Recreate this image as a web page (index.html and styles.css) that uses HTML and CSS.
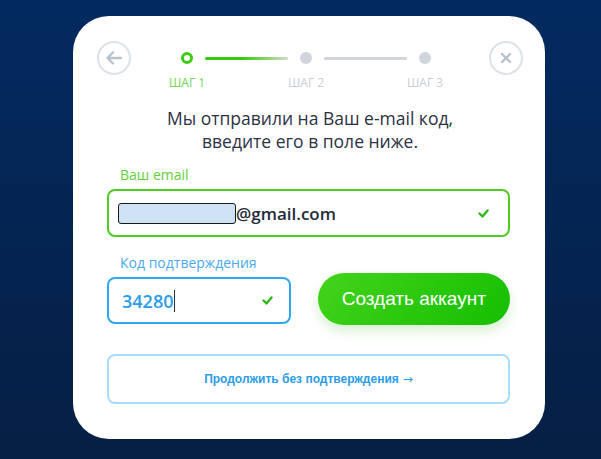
FILE: index.html
```html
<!DOCTYPE html>
<html lang="ru">
<head>
    <meta charset="UTF-8">
    <meta name="viewport" content="width=device-width, initial-scale=1.0">
    <title>Регистрация</title>
    <link rel="stylesheet" href="styles.css">
</head>
<body>
    <div class="card">
        <div class="nav">
            <button class="round-btn" aria-label="Назад">
                <svg width="16" height="14" viewBox="0 0 16 14"><path d="M15 7H2M7 1.5L1.5 7 7 12.5" fill="none" stroke="#b9c1cd" stroke-width="2.4" stroke-linecap="round" stroke-linejoin="round"/></svg>
            </button>
            <div class="steps">
                <div class="step active">
                    <span class="dot"></span>
                    <span class="step-label">ШАГ 1</span>
                </div>
                <span class="line done"></span>
                <div class="step">
                    <span class="dot"></span>
                    <span class="step-label">ШАГ 2</span>
                </div>
                <span class="line"></span>
                <div class="step">
                    <span class="dot"></span>
                    <span class="step-label">ШАГ 3</span>
                </div>
            </div>
            <button class="round-btn" aria-label="Закрыть">
                <svg width="12" height="12" viewBox="0 0 12 12"><path d="M2 2l8 8M10 2l-8 8" fill="none" stroke="#b9c1cd" stroke-width="2.4" stroke-linecap="round"/></svg>
            </button>
        </div>

        <p class="intro">Мы отправили на Ваш e-mail код,<br>введите его в поле ниже.</p>

        <div class="form">
            <label class="field-label green">Ваш email</label>
            <div class="input email">
                <span class="mask"></span><span class="value">@gmail.com</span>
                <svg class="check" width="11" height="9" viewBox="0 0 11 9"><path d="M1.5 4.5l3 3 5-6" fill="none" stroke="#2fb81a" stroke-width="2.4" stroke-linecap="round" stroke-linejoin="round"/></svg>
            </div>

            <label class="field-label blue">Код подтверждения</label>
            <div class="code-row">
                <div class="input code">
                    <span class="value">34280</span><span class="caret"></span>
                    <svg class="check" width="11" height="9" viewBox="0 0 11 9"><path d="M1.5 4.5l3 3 5-6" fill="none" stroke="#2fb81a" stroke-width="2.4" stroke-linecap="round" stroke-linejoin="round"/></svg>
                </div>
                <button class="create-btn">Создать аккаунт</button>
            </div>

            <a class="skip" href="#">Продолжить без подтверждения <span class="arrow">→</span></a>
        </div>
    </div>
</body>
</html>
```

FILE: styles.css
```css
body {
    margin: 0;
    height: 459px;
    font-family: "Open Sans", "Liberation Sans", sans-serif;
    background: linear-gradient(to bottom, #032a60, #061f44);
    overflow: hidden;
}
.card {
    box-sizing: border-box;
    width: 472px;
    height: 423px;
    margin: 16px 0 0 73px;
    padding: 25px 22px 0 24px;
    background: #fff;
    border-radius: 36px;
}
.nav {
    display: flex;
    justify-content: space-between;
    align-items: flex-start;
    height: 66px;
}
.round-btn {
    box-sizing: border-box;
    width: 34px;
    height: 34px;
    padding: 0;
    border: 2px solid #dde1e8;
    border-radius: 50%;
    background: #fff;
    display: flex;
    justify-content: center;
    align-items: center;
}
.steps {
    display: flex;
    align-items: flex-start;
    margin-top: 11px;
    margin-right: 8px;
}
.step {
    width: 12px;
    display: flex;
    flex-direction: column;
    align-items: center;
}
.dot {
    box-sizing: border-box;
    width: 12px;
    height: 12px;
    border-radius: 50%;
    background: #d0d5dd;
}
.step.active .dot {
    background: #fff;
    border: 3px solid #3ccd12;
}
.step-label {
    margin-top: 12px;
    font-size: 12px;
    line-height: 14px;
    color: #c8ced8;
    white-space: nowrap;
}
.step.active .step-label {
    color: #74d655;
}
.line {
    width: 83px;
    height: 3px;
    margin: 5px 12px 0;
    border-radius: 2px;
    background: #d0d5dd;
}
.line.done {
    background: linear-gradient(to right, #35cb0c 45%, #d4dbc9);
}
.intro {
    margin: 0;
    text-align: center;
    font-size: 17.5px;
    line-height: 23px;
    color: #2b3243;
}
.form {
    margin: 13px 13px 0 10px;
    display: flex;
    flex-direction: column;
}
.field-label {
    padding-left: 13px;
    font-size: 14px;
    line-height: 18px;
    margin-bottom: 5px;
}
.field-label.green {
    color: #63cf36;
}
.field-label.blue {
    color: #4aa9ee;
    margin-top: 17px;
}
.input {
    box-sizing: border-box;
    height: 48px;
    border-radius: 8px;
    display: flex;
    align-items: center;
    padding: 0 19px 0 9px;
}
.input .check {
    margin-left: auto;
}
.email {
    border: 2px solid #4fcb22;
}
.mask {
    box-sizing: border-box;
    width: 118px;
    height: 21px;
    border: 1px solid #1a1a1a;
    border-radius: 3px;
    background: #cfe2f3;
}
.email .value {
    font-size: 17px;
    font-weight: 600;
    color: #1f2a3b;
}
.code-row {
    display: flex;
    align-items: flex-start;
    gap: 27px;
    margin-top: -4px;
}
.code {
    width: 184px;
    height: 47px;
    margin-top: 4px;
    border: 2px solid #2fa8f3;
    padding-left: 13px;
    padding-right: 16px;
}
.code .value {
    font-size: 18px;
    font-weight: 600;
    color: #2b9de8;
}
.caret {
    width: 1px;
    height: 22px;
    background: #2b3243;
    margin-left: 1px;
}
.create-btn {
    width: 193px;
    height: 52px;
    border: none;
    border-radius: 26px;
    background: linear-gradient(135deg, #44d41c, #14be00);
    box-shadow: 0 6px 12px rgba(60, 180, 30, 0.2);
    color: #fff;
    font-family: "Liberation Sans", Arial, sans-serif;
    font-size: 19px;
}
.skip {
    box-sizing: border-box;
    height: 50px;
    margin-top: 29px;
    border: 2px solid #a9dcfb;
    border-radius: 8px;
    display: flex;
    justify-content: center;
    align-items: center;
    font-family: "Liberation Sans", Arial, sans-serif;
    font-size: 12px;
    font-weight: bold;
    color: #2b9de8;
    text-decoration: none;
}
.arrow {
    margin-left: 4px;
    font-family: "DejaVu Sans", sans-serif;
    font-weight: normal;
}
```
